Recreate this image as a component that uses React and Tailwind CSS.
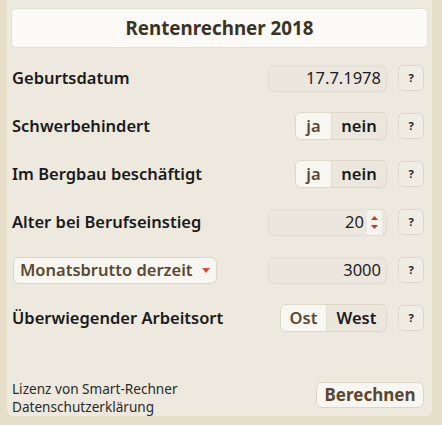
import React from "react";

const font = { fontFamily: '"Noto Sans", "Open Sans", sans-serif' };

function Help() {
  return (
    <button className="ml-[11px] flex h-[26px] w-[26px] items-center justify-center rounded-[5px] border border-[#dcd7cb] bg-[#efece4] text-[11px] font-bold text-[#222]">
      ?
    </button>
  );
}

function Field({ value, spinner }) {
  return (
    <div className="flex h-[27px] w-[119px] items-center justify-end rounded-[6px] border border-[#e0dbcf] bg-[#ebe7de] pr-[5px] text-[16.5px] text-[#1d1d1d]">
      <span className="leading-none">{value}</span>
      {spinner && (
        <div className="ml-[3px] mr-[-1px] flex h-[25px] w-[15px] flex-col items-center justify-center gap-[5px] bg-[#f6f4ef]">
          <svg width="7" height="4" viewBox="0 0 7 4"><path d="M0 4 L3.5 0 L7 4 Z" fill="#c0392b" /></svg>
          <svg width="7" height="4" viewBox="0 0 7 4"><path d="M0 0 L3.5 4 L7 0 Z" fill="#c0392b" /></svg>
        </div>
      )}
    </div>
  );
}

function Toggle({ a, b, wa, wb }) {
  return (
    <div className="flex h-[28px] overflow-hidden rounded-[6px] border border-[#ddd7ca] text-[16.5px] font-semibold">
      <div className={`flex items-center justify-center bg-[#f8f6f1] text-[#5a4a33] ${wa}`}>{a}</div>
      <div className={`flex items-center justify-center border-l border-[#e2ddd2] bg-[#ebe7dd] text-[#1a1a1a] ${wb}`}>{b}</div>
    </div>
  );
}

function Row({ label, children }) {
  return (
    <div className="flex h-[48px] items-center pl-[5px] pr-[8px]">
      <div className="flex-1 text-[16.5px] font-semibold text-[#1a1a1a]">{label}</div>
      {children}
      <Help />
    </div>
  );
}

export default function App() {
  return (
    <div className="h-[425px] w-[442px] overflow-hidden bg-[#e7dec9]" style={font}>
      <div className="ml-[7px] flex h-[416px] w-[425px] flex-col rounded-b-[6px] bg-[#ede9df]">
        <div className="mx-[4px] mt-[8px] flex h-[40px] items-center justify-center rounded-[5px] border border-[#e6e1d6] bg-[#fbfaf7] text-[18.8px] font-bold text-[#3a3425]">
          Rentenrechner 2018
        </div>
        <div className="mt-[6px]">
          <Row label="Geburtsdatum">
            <Field value="17.7.1978" />
          </Row>
          <Row label="Schwerbehindert">
            <Toggle a="ja" b="nein" wa="w-[35px]" wb="w-[55px]" />
          </Row>
          <Row label="Im Bergbau beschäftigt">
            <Toggle a="ja" b="nein" wa="w-[35px]" wb="w-[55px]" />
          </Row>
          <Row label="Alter bei Berufseinstieg">
            <Field value="20" spinner />
          </Row>
          <div className="flex h-[48px] items-center pl-[6px] pr-[8px]">
            <div className="flex-1">
              <div className="flex h-[27px] w-[204px] items-center rounded-[6px] border border-[#ddd6c6] bg-[#f8f6f1] pl-[6px] text-[16.5px] font-semibold text-[#5a4930]">
                Monatsbrutto derzeit
                <svg className="ml-[9px]" width="8" height="5" viewBox="0 0 8 5"><path d="M0 0 L4 5 L8 0 Z" fill="#d9483b" /></svg>
              </div>
            </div>
            <Field value="3000" />
            <Help />
          </div>
          <Row label="Überwiegender Arbeitsort">
            <Toggle a="Ost" b="West" wa="w-[45px]" wb="w-[60px]" />
          </Row>
        </div>
        <div className="mt-auto flex items-end pl-[5px] pr-[8px]">
          <div className="flex-1 text-[13.6px] leading-[18px] text-[#2a2a2a]">
            <div>Lizenz von Smart-Rechner</div>
            <div>Datenschutzerklärung</div>
          </div>
          <button className="mb-[8px] flex h-[26px] w-[108px] items-center justify-center rounded-[6px] border border-[#ddd6c6] bg-[#f8f6f0] text-[17px] font-bold text-[#5a4630]">
            Berechnen
          </button>
        </div>
      </div>
    </div>
  );
}
